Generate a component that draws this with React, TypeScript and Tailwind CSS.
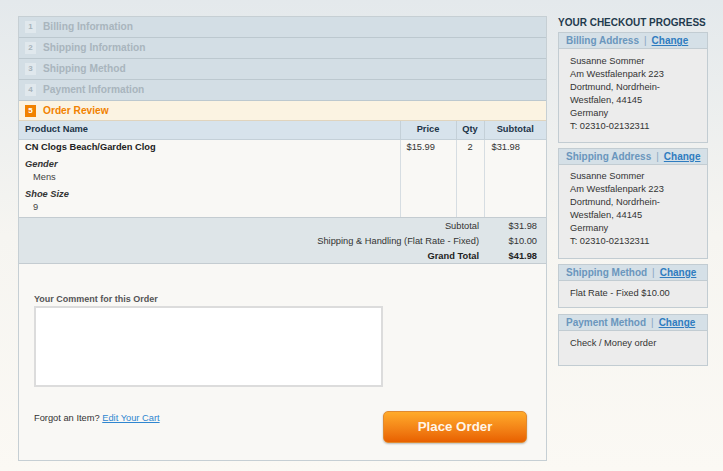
import React from "react";

const font = { fontFamily: '"Liberation Sans", Arial, sans-serif' };

const steps = [
  { n: "1", label: "Billing Information" },
  { n: "2", label: "Shipping Information" },
  { n: "3", label: "Shipping Method" },
  { n: "4", label: "Payment Information" },
];

function StepRow({ n, label }: { n: string; label: string }) {
  return (
    <div className="flex h-[21px] items-center border-b border-[#bcc8cf] bg-[#d3dee5] pl-[6px]">
      <span className="flex h-[12px] w-[11px] items-center justify-center bg-[#e0e8ed] text-[8px] font-bold text-[#a7b3bb]">
        {n}
      </span>
      <span className="ml-[7px] text-[10.2px] font-bold text-[#a9b5bd]">{label}</span>
    </div>
  );
}

function SideBox({
  title,
  children,
  bodyClass,
}: {
  title: string;
  children: React.ReactNode;
  bodyClass: string;
}) {
  return (
    <div className="border border-[#c2ccd2]">
      <div className="flex h-[16px] items-center border-b border-[#c2ccd2] bg-[#d5e0e7] pl-[7px] text-[10px] font-bold text-[#6a96bd]">
        <span>{title}</span>
        <span className="mx-[5px] font-normal text-[#8aa8c2]">|</span>
        <a className="text-[#2f7cc0] underline">Change</a>
      </div>
      <div className={"bg-[#ececec] pl-[11px] text-[9.3px] leading-[13px] text-[#333] " + bodyClass}>
        {children}
      </div>
    </div>
  );
}

function Address() {
  return (
    <>
      <div>Susanne Sommer</div>
      <div>Am Westfalenpark 223</div>
      <div>Dortmund, Nordrhein-</div>
      <div>Westfalen, 44145</div>
      <div>Germany</div>
      <div>T: 02310-02132311</div>
    </>
  );
}

export default function App() {
  return (
    <div
      style={font}
      className="flex h-[471px] w-[723px] bg-gradient-to-b from-[#e4e9ec] via-[#f6f5f1] to-[#fbf9f4] pl-[18px] pt-[16px]"
    >
      {/* checkout steps and order review */}
      <div className="flex h-[445px] w-[529px] flex-col border border-[#c6cfd4] bg-[#f9f8f5]">
        {steps.map((s) => (
          <StepRow key={s.n} n={s.n} label={s.label} />
        ))}
        <div className="flex h-[20px] items-center border-b border-[#e0d4bd] bg-[#fbf3e2] pl-[6px]">
          <span className="flex h-[12px] w-[11px] items-center justify-center bg-[#f18200] text-[8px] font-bold text-white">
            5
          </span>
          <span className="ml-[7px] text-[10.2px] font-bold text-[#f18200]">Order Review</span>
        </div>

        <table className="w-[527px] table-fixed border-collapse text-[9.3px]">
          <colgroup>
            <col className="w-[381px]" />
            <col className="w-[56px]" />
            <col className="w-[28px]" />
            <col className="w-[62px]" />
          </colgroup>
          <thead>
            <tr className="h-[18px] border-b border-[#c4d0d8] bg-[#d7e3ec] font-bold text-[#1c3448]">
              <th className="pl-[6px] text-left">Product Name</th>
              <th className="border-l border-[#c4d0d8] text-center">Price</th>
              <th className="border-l border-[#c4d0d8] text-center">Qty</th>
              <th className="border-l border-[#c4d0d8] text-center">Subtotal</th>
            </tr>
          </thead>
          <tbody>
            <tr className="h-[78px] align-top leading-[13px] text-[#333]">
              <td className="pl-[6px] pt-[1px]">
                <div className="font-bold text-[#222]">CN Clogs Beach/Garden Clog</div>
                <div className="mt-[4px] font-bold italic text-[#333]">Gender</div>
                <div className="pl-[8px] text-[#444]">Mens</div>
                <div className="mt-[4px] font-bold italic text-[#333]">Shoe Size</div>
                <div className="pl-[8px] text-[#444]">9</div>
              </td>
              <td className="border-l border-[#d6dde2] pl-[6px] pt-[1px]">$15.99</td>
              <td className="border-l border-[#d6dde2] pt-[1px] text-center">2</td>
              <td className="border-l border-[#d6dde2] pl-[7px] pt-[1px]">$31.98</td>
            </tr>
          </tbody>
        </table>

        <div className="h-[47px] border-y border-[#c4ccd1] bg-[#dee5e8] pt-[1px] text-[9.3px] text-[#333]">
          <div className="flex h-[15px] items-center">
            <span className="w-[465px] pr-[5px] text-right">Subtotal</span>
            <span className="w-[62px] pr-[9px] text-right">$31.98</span>
          </div>
          <div className="flex h-[15px] items-center">
            <span className="w-[465px] pr-[5px] text-right">Shipping &amp; Handling (Flat Rate - Fixed)</span>
            <span className="w-[62px] pr-[9px] text-right">$10.00</span>
          </div>
          <div className="flex h-[15px] items-center font-bold text-[#222]">
            <span className="w-[465px] pr-[5px] text-right">Grand Total</span>
            <span className="w-[62px] pr-[9px] text-right">$41.98</span>
          </div>
        </div>

        <div className="flex flex-1 flex-col pl-[15px] pr-[19px]">
          <label className="mt-[29px] text-[9px] font-bold leading-[12px] text-[#555]">
            Your Comment for this Order
          </label>
          <div className="mt-[1px] h-[81px] w-[349px] border-2 border-[#dcdcdc] bg-white" />
          <div className="mt-[24px] flex items-start justify-between">
            <div className="mt-[1px] text-[9.3px] text-[#333]">
              Forgot an Item?{" "}
              <a className="text-[#2f86d0] underline">Edit Your Cart</a>
            </div>
            <button className="h-[32px] w-[144px] rounded-[5px] border border-[#e08a30] bg-gradient-to-b from-[#ffab2a] to-[#e86000] text-[13.3px] font-bold text-[#fff5e8] shadow-[0_1px_2px_rgba(0,0,0,0.25)]">
              Place Order
            </button>
          </div>
        </div>
      </div>

      {/* checkout progress sidebar */}
      <div className="ml-[11px] flex w-[150px] flex-col">
        <div className="mt-[1px] whitespace-nowrap text-[10px] font-bold leading-[12px] text-[#1f3a4e]">
          YOUR CHECKOUT PROGRESS
        </div>
        <div className="mt-[3px]">
          <SideBox title="Billing Address" bodyClass="h-[93px] pt-[6px]">
            <Address />
          </SideBox>
        </div>
        <div className="mt-[5px]">
          <SideBox title="Shipping Address" bodyClass="h-[93px] pt-[5px]">
            <Address />
          </SideBox>
        </div>
        <div className="mt-[5px]">
          <SideBox title="Shipping Method" bodyClass="h-[26px] pt-[6px]">
            Flat Rate - Fixed $10.00
          </SideBox>
        </div>
        <div className="mt-[6px]">
          <SideBox title="Payment Method" bodyClass="h-[34px] pt-[6px]">
            Check / Money order
          </SideBox>
        </div>
      </div>
    </div>
  );
}
